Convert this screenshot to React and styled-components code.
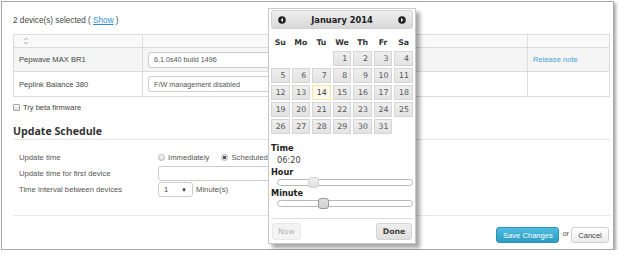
import React from "react";
import styled, { createGlobalStyle } from "styled-components";

const GlobalStyle = createGlobalStyle`
  html, body { margin: 0; padding: 0; background: #fff; }
  body { font-family: "Liberation Sans", Arial, sans-serif; color: #444; }
  * { box-sizing: border-box; }
`;

const Panel = styled.div`
  position: relative;
  margin: 1px 6px 0 1px;
  border: 1px solid #a8a8a8;
  box-shadow: 2px 2px 3px rgba(0, 0, 0, 0.35);
  padding: 0 3px 6px 11px;
  background: #fff;
`;

const Summary = styled.div`
  padding-top: 13px;
  font-size: 8.2px;
  line-height: 12px;
  color: #444;
`;

const Link = styled.a`
  color: ${(p) => (p.$light ? "#4aa3d6" : "#2b8fd0")};
  text-decoration: ${(p) => (p.$light ? "none" : "underline")};
  cursor: pointer;
`;

const DevTable = styled.div`
  margin-top: 7px;
  display: grid;
  grid-template-columns: 129px 385px 82px;
  border-top: 1px solid #dcdcdc;
  border-left: 1px solid #dcdcdc;
`;

const Cell = styled.div`
  height: ${(p) => p.$h}px;
  background: ${(p) => p.$bg || "#fff"};
  border-right: 1px solid #dcdcdc;
  border-bottom: 1px solid #dcdcdc;
  display: flex;
  align-items: center;
  padding: 0 5px;
  font-size: 7.6px;
  color: #444;
`;

const FieldBox = styled.div`
  width: 260px;
  height: 16px;
  border: 1px solid #ccc;
  border-radius: 3px;
  background: #fff;
  display: flex;
  align-items: center;
  padding-left: 5px;
  font-size: 7.2px;
  color: #555;
`;

const CheckRow = styled.label`
  margin-top: 3px;
  height: 14px;
  display: flex;
  align-items: center;
  gap: 3px;
  font-size: 7.5px;
  color: #444;
`;

const CheckBox = styled.span`
  width: 7px;
  height: 7px;
  border: 1px solid #a8a8a8;
  border-radius: 1px;
  background: linear-gradient(#fdfdfd, #dcdcdc);
`;

const Heading = styled.h2`
  margin: 10px 0 0;
  font-family: "Open Sans", "Liberation Sans", sans-serif;
  font-weight: 700;
  font-size: 10.6px;
  line-height: 14px;
  color: #333;
  padding-bottom: 1px;
  border-bottom: 1px solid #e4e4e4;
`;

const Form = styled.div`
  margin-top: 9px;
  padding-left: 6px;
  display: grid;
  grid-template-columns: 139px 1fr;
  grid-template-rows: 16px 16px 17px;
  font-size: 7.7px;
  color: #555;
`;

const Label = styled.div`
  display: flex;
  align-items: center;
`;

const Control = styled.div`
  display: flex;
  align-items: center;
  gap: 3px;
`;

const Radio = styled.span`
  width: 7px;
  height: 7px;
  border-radius: 50%;
  border: 1px solid #b5b5b5;
  background: ${(p) =>
    p.$on
      ? "radial-gradient(circle, #555 0 1.6px, #e8e8e8 2px)"
      : "linear-gradient(#fafafa, #e0e0e0)"};
`;

const RadioText = styled.span`
  margin-right: 9px;
`;

const TextInput = styled.div`
  width: 200px;
  height: 15px;
  border: 1px solid #ccc;
  border-radius: 3px;
  background: #fff;
`;

const Select = styled.div`
  width: 35px;
  height: 15px;
  border: 1px solid #ccc;
  border-radius: 3px;
  background: #fff;
  display: flex;
  align-items: center;
  justify-content: space-between;
  padding: 0 5px 0 5px;
  font-size: 7.4px;
  color: #444;
`;

const Caret = styled.span`
  font-size: 6px;
  color: #333;
`;

const Footer = styled.div`
  margin-top: 17px;
  border-top: 1px solid #e8e8e8;
  padding-top: 11px;
  padding-right: 1px;
  display: flex;
  justify-content: flex-end;
  align-items: center;
  font-size: 7.4px;
`;

const Button = styled.button`
  height: 16px;
  width: ${(p) => p.$w}px;
  padding: 0;
  font-family: "Liberation Sans", Arial, sans-serif;
  font-size: 7.6px;
  border-radius: 3px;
  border: 1px solid ${(p) => (p.$primary ? "#2f93b8" : "#cfcfcf")};
  background: ${(p) =>
    p.$primary
      ? "linear-gradient(#4fbde0, #2c9cc4)"
      : "linear-gradient(#ffffff, #ececec)"};
  color: ${(p) => (p.$primary ? "#fff" : "#444")};
`;

const Or = styled.span`
  color: #555;
  margin: -4px 2px 0 3px;
`;

/* ---------- Date picker overlay ---------- */

const Picker = styled.div`
  position: absolute;
  left: 266px;
  top: 6px;
  width: 148px;
  padding: 1px 2px 3px 2px;
  background: #fff;
  border: 1px solid #c8c8c8;
  box-shadow: 4px 4px 4px rgba(0, 0, 0, 0.35);
  font-family: "DejaVu Sans", Verdana, sans-serif;
  color: #333;
`;

const PickerHead = styled.div`
  height: 19px;
  border: 1px solid #d0d0d0;
  border-radius: 3px;
  background: linear-gradient(#efefef, #d8d8d8);
  display: flex;
  align-items: center;
  justify-content: space-between;
  padding: 0 6px;
`;

const Title = styled.span`
  font-weight: 700;
  font-size: 8.3px;
  color: #222;
`;

const DayGrid = styled.div`
  display: grid;
  grid-template-columns: repeat(7, 1fr);
  column-gap: 2px;
  row-gap: 2px;
`;

const DayName = styled.div`
  margin-top: 4px;
  height: 18px;
  display: flex;
  align-items: center;
  justify-content: center;
  font-weight: 700;
  font-size: 7.8px;
  color: #333;
`;

const Day = styled.div`
  height: 15px;
  border: 1px solid ${(p) => (p.$today ? "#f6e8a0" : "#d6d6d6")};
  background: ${(p) =>
    p.$today ? "#fbf9ee" : "linear-gradient(#eeeeee, #e3e3e3)"};
  text-align: right;
  padding-right: 3px;
  line-height: 13px;
  font-size: 7.8px;
  color: ${(p) => (p.$today ? "#363636" : "#555")};
`;

const Empty = styled.div`
  height: 15px;
`;

const TimeLabel = styled.div`
  margin-top: ${(p) => p.$mt || 0}px;
  height: ${(p) => p.$h || 11}px;
  display: flex;
  align-items: center;
  font-weight: 700;
  font-size: 8.2px;
  color: #222;
`;

const TimeValue = styled.div`
  height: 12px;
  display: flex;
  align-items: center;
  padding-left: 6px;
  font-size: 8.2px;
  color: #444;
`;

const Slider = styled.div`
  position: relative;
  height: 10px;
  margin-left: 6px;
  display: flex;
  align-items: center;
`;

const Track = styled.div`
  width: 100%;
  height: 7px;
  border: 1px solid #b8b8b8;
  border-radius: 4px;
  background: #fff;
`;

const Handle = styled.span`
  position: absolute;
  top: -0.5px;
  width: 11px;
  height: 11px;
  border-radius: 3px;
  border: 1px solid ${(p) => (p.$active ? "#999" : "#d3d3d3")};
  background: ${(p) =>
    p.$active ? "linear-gradient(#e0e0e0, #d2d2d2)" : "linear-gradient(#eeeeee, #e0e0e0)"};
`;

const PickerFoot = styled.div`
  margin-top: 10px;
  border-top: 1px solid #dcdcdc;
  padding: 4px 1px 0 1px;
  display: flex;
  justify-content: space-between;
`;

const PickButton = styled.button`
  height: 17px;
  width: ${(p) => p.$w}px;
  padding: 0;
  border-radius: 3px;
  font-family: "DejaVu Sans", Verdana, sans-serif;
  font-size: 7.8px;
  font-weight: ${(p) => (p.$bold ? 700 : 400)};
  border: 1px solid ${(p) => (p.$disabled ? "#e8e8e8" : "#d3d3d3")};
  background: ${(p) =>
    p.$disabled ? "#f4f4f4" : "linear-gradient(#eeeeee, #e0e0e0)"};
  color: ${(p) => (p.$disabled ? "#b5b5b5" : "#444")};
`;

const CircleArrow = ({ dir }) => (
  <svg width="8" height="8" viewBox="0 0 8 8">
    <circle cx="4" cy="4" r="3.8" fill="#222" />
    {dir === "left" ? (
      <polygon points="5,2 2.6,4 5,6" fill="#fff" />
    ) : (
      <polygon points="3,2 5.4,4 3,6" fill="#fff" />
    )}
  </svg>
);

const SortIcon = () => (
  <svg width="6" height="8" viewBox="0 0 6 8" style={{ marginLeft: 4 }}>
    <polyline points="1,3 3,1 5,3" fill="none" stroke="#aaa" strokeWidth="0.9" />
    <polyline points="1,5 3,7 5,5" fill="none" stroke="#aaa" strokeWidth="0.9" />
  </svg>
);

const days = [null, null, null, ...Array.from({ length: 31 }, (_, i) => i + 1)];
const names = ["Su", "Mo", "Tu", "We", "Th", "Fr", "Sa"];

function DatePicker() {
  return (
    <Picker>
      <PickerHead>
        <CircleArrow dir="left" />
        <Title>January 2014</Title>
        <CircleArrow dir="right" />
      </PickerHead>
      <DayGrid>
        {names.map((n) => (
          <DayName key={n}>{n}</DayName>
        ))}
      </DayGrid>
      <DayGrid>
        {days.map((d, i) =>
          d ? (
            <Day key={i} $today={d === 14}>
              {d}
            </Day>
          ) : (
            <Empty key={i} />
          )
        )}
      </DayGrid>
      <TimeLabel $mt={8} $h={12}>Time</TimeLabel>
      <TimeValue>06:20</TimeValue>
      <TimeLabel>Hour</TimeLabel>
      <Slider>
        <Track />
        <Handle style={{ left: 31 }} />
      </Slider>
      <TimeLabel>Minute</TimeLabel>
      <Slider>
        <Track />
        <Handle $active style={{ left: 41 }} />
      </Slider>
      <PickerFoot>
        <PickButton $w={29} $disabled>Now</PickButton>
        <PickButton $w={36} $bold>Done</PickButton>
      </PickerFoot>
    </Picker>
  );
}

export default function App() {
  return (
    <>
      <GlobalStyle />
      <Panel>
        <Summary>
          2 device(s) selected ( <Link>Show</Link> )
        </Summary>
        <DevTable>
          <Cell $h={13} $bg="#f9f9f9">
            <SortIcon />
          </Cell>
          <Cell $h={13} $bg="#f9f9f9" />
          <Cell $h={13} $bg="#f9f9f9" />

          <Cell $h={24} $bg="#f5f5f5">Pepwave MAX BR1</Cell>
          <Cell $h={24} $bg="#f5f5f5">
            <FieldBox>6.1.0s40 build 1496</FieldBox>
          </Cell>
          <Cell $h={24} $bg="#f5f5f5">
            <Link $light>Release note</Link>
          </Cell>

          <Cell $h={25}>Peplink Balance 380</Cell>
          <Cell $h={25}>
            <FieldBox>F/W management disabled</FieldBox>
          </Cell>
          <Cell $h={25} />
        </DevTable>

        <CheckRow>
          <CheckBox />
          Try beta firmware
        </CheckRow>

        <Heading>Update Schedule</Heading>

        <Form>
          <Label>Update time</Label>
          <Control>
            <Radio />
            <RadioText>Immediately</RadioText>
            <Radio $on />
            <RadioText>Scheduled</RadioText>
          </Control>
          <Label>Update time for first device</Label>
          <Control>
            <TextInput />
          </Control>
          <Label>Time interval between devices</Label>
          <Control>
            <Select>
              1 <Caret>▼</Caret>
            </Select>
            <span>Minute(s)</span>
          </Control>
        </Form>

        <Footer>
          <Button $primary $w={63}>Save Changes</Button>
          <Or>or</Or>
          <Button $w={38}>Cancel</Button>
        </Footer>

        <DatePicker />
      </Panel>
    </>
  );
}
